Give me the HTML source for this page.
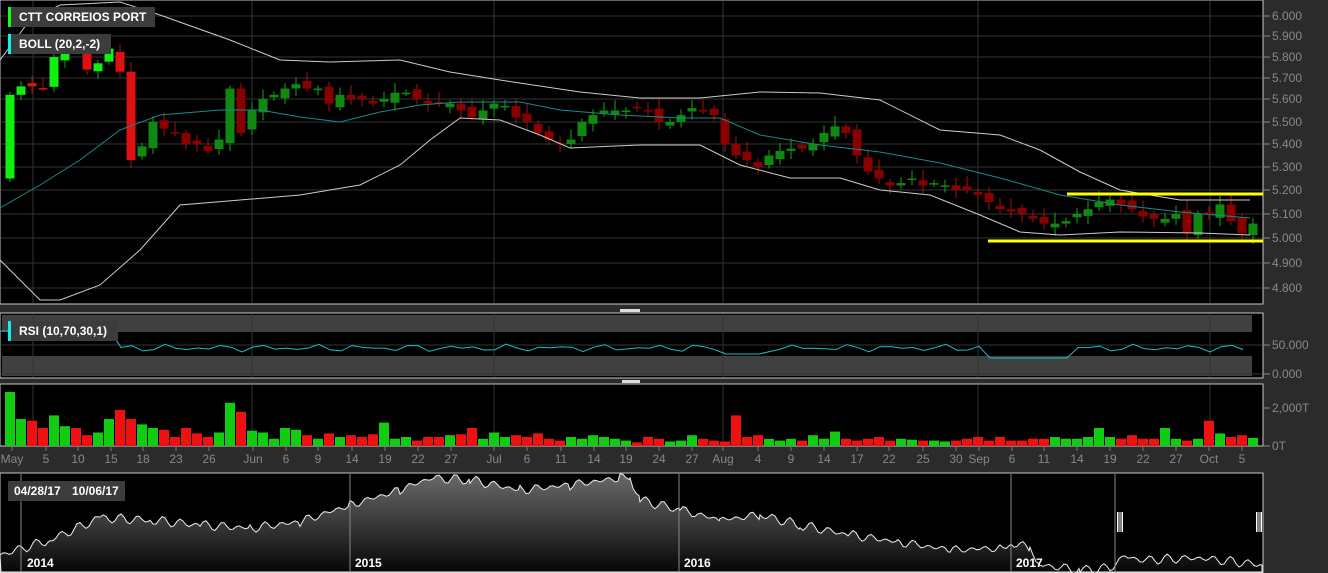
<!DOCTYPE html><html><head><meta charset="utf-8"><style>
body{margin:0;background:#2b2b2b;width:1328px;height:573px;overflow:hidden;font-family:"Liberation Sans",sans-serif}
svg{position:absolute;left:0;top:0}
.lab{position:absolute;background:#3c3c3c;color:#fff;font-size:12px;font-weight:bold;height:20px;line-height:20px;padding:0 8px}
</style></head><body>
<svg id="s" width="1328" height="573" xmlns="http://www.w3.org/2000/svg" font-family="Liberation Sans, sans-serif">
<defs><linearGradient id="g" x1="0" y1="0" x2="0" y2="1"><stop offset="0" stop-color="#6a6a6a"/><stop offset="1" stop-color="#050505"/></linearGradient></defs>
<rect x="0" y="0" width="1263" height="304" fill="#000" stroke="#c8c8d0"/>
<rect x="0" y="313" width="1263" height="65" fill="#000" stroke="#c8c8d0"/>
<rect x="2" y="315" width="1250" height="17" fill="#404040"/>
<rect x="2" y="356" width="1250" height="20" fill="#404040"/>
<rect x="0" y="384" width="1263" height="62" fill="#000" stroke="#c8c8d0"/>
<rect x="0" y="473" width="1263" height="100" fill="#000" stroke="#c8c8d0"/>
<g id="grid" stroke="#333" stroke-width="1"></g>
<g id="c"></g>
<g fill="#888" font-size="12" id="ax"></g>
<rect x="620" y="309" width="20" height="3" fill="#ddd"/><rect x="622" y="380" width="18" height="3" fill="#ddd"/>
</svg>
<div class="lab" style="left:8px;top:7px;width:128px;border-left:3px solid #1f1">CTT CORREIOS PORT</div>
<div class="lab" style="left:8px;top:34px;width:84px;border-left:3px solid #1ee">BOLL (20,2,-2)</div>
<div class="lab" style="left:8px;top:321px;width:91px;border-left:3px solid #1ee">RSI (10,70,30,1)</div>
<div class="lab" style="left:8px;top:481px;width:47px;padding:0 6px">04/28/17</div>
<div class="lab" style="left:66px;top:481px;width:47px;padding:0 6px">10/06/17</div>
<script>
const NS="http://www.w3.org/2000/svg",c=document.getElementById('c'),gr=document.getElementById('grid'),ax=document.getElementById('ax');
function el(t,a,p){const e=document.createElementNS(NS,t);for(const k in a)e.setAttribute(k,a[k]);(p||c).appendChild(e);return e}
const P=[[6,16],[5.9,36],[5.8,57],[5.7,78],[5.6,99],[5.5,122],[5.4,144],[5.3,167],[5.2,190],[5.1,214],[5,238],[4.9,263],[4.8,288]];
function Y(p){for(let i=0;i<P.length-1;i++){if(p<=P[i][0]&&p>=P[i+1][0]){return P[i][1]+(P[i][0]-p)/(0.1)*(P[i+1][1]-P[i][1])}}return p>6?16-(p-6)*200:288+(4.8-p)*250}
P.forEach(q=>{el('line',{x1:1,x2:1262,y1:q[1],y2:q[1]},gr);el('line',{x1:1263,x2:1270,y1:q[1],y2:q[1],stroke:'#888'},gr);const t=el('text',{x:1272,y:q[1]+4},ax);t.textContent=q[0].toFixed(3)});
[[345,'50.000'],[374,'0.000'],[408,'2,000T'],[446,'0T']].forEach(q=>{if(q[1]<440)el('line',{x1:1,x2:1262,y1:q[0],y2:q[0]},gr);el('line',{x1:1263,x2:1270,y1:q[0],y2:q[0],stroke:'#888'},gr);const t=el('text',{x:1272,y:q[0]+4},ax);t.textContent=q[1]});
[33,252,494,723,978,1210].forEach(x=>{el('line',{x1:x,x2:x,y1:1,y2:303},gr);el('line',{x1:x,x2:x,y1:314,y2:377},gr);el('line',{x1:x,x2:x,y1:385,y2:445},gr)});
const D=[['May',12],['5',46],['10',78],['15',111],['18',143],['23',176],['26',209],['Jun',253],['6',286],['9',318],['14',352],['19',385],['22',418],['27',451],['Jul',494],['6',527],['11',561],['14',594],['19',626],['24',659],['27',692],['Aug',723],['4',758],['9',791],['14',824],['17',857],['22',889],['25',923],['30',956],['Sep',979],['6',1012],['11',1044],['14',1077],['19',1110],['22',1143],['27',1176],['Oct',1209],['5',1242]];
D.forEach(d=>{el('line',{x1:d[1],x2:d[1],y1:446,y2:451,stroke:'#777'},gr);const t=el('text',{x:d[1],y:463,'text-anchor':'middle'},ax);t.textContent=d[0]});
const C=[5.62,5.66,5.66,5.65,5.80,5.85,5.83,5.74,5.77,5.84,5.73,5.33,5.39,5.50,5.47,5.45,5.40,5.40,5.37,5.42,5.65,5.45,5.55,5.60,5.62,5.65,5.67,5.65,5.65,5.58,5.62,5.60,5.60,5.58,5.60,5.63,5.63,5.60,5.58,5.58,5.58,5.55,5.52,5.55,5.58,5.57,5.52,5.50,5.45,5.42,5.40,5.42,5.50,5.53,5.55,5.55,5.55,5.56,5.55,5.50,5.50,5.53,5.56,5.55,5.53,5.40,5.35,5.33,5.30,5.35,5.37,5.38,5.38,5.40,5.45,5.48,5.45,5.35,5.28,5.25,5.22,5.23,5.25,5.22,5.23,5.22,5.20,5.20,5.18,5.15,5.12,5.11,5.10,5.08,5.06,5.06,5.07,5.10,5.12,5.15,5.16,5.14,5.12,5.09,5.08,5.08,5.10,5.02,5.10,5.10,5.14,5.07,5.02,5.06];
let prev=5.25,vols=[];
C.forEach((cl,i)=>{const x=10+i*11,op=(i==0)?5.25:prev+((i*7)%5-2)*0.008,up=cl>=op,hi=Math.max(op,cl)+0.015+(i%4)*0.01,lo=Math.min(op,cl)-0.015-(i%3)*0.01;
const col=up?(i<12?'#11ee11':'#118811'):(i<12?'#dd1111':'#880000');
el('line',{x1:x,x2:x,y1:Y(hi),y2:Y(lo),stroke:up?'#11aa11':'#aa1111'});
const a=Y(Math.max(op,cl)),b=Y(Math.min(op,cl));el('rect',{x:x-4.5,y:a,width:9,height:Math.max(1.5,b-a),fill:col});
const v=[60,30,28,20,34,22,20,12,15,30,40,30,24,20,18,10,20,14,10,15,48,38,17,15,8,20,18,12,8,14,10,12,10,13,26,8,10,6,10,10,12,13,20,8,15,10,12,10,14,8,6,10,8,12,10,8,6,4,10,8,5,6,12,8,6,5,34,10,12,8,6,8,6,12,8,16,8,6,8,10,6,8,7,6,6,5,6,8,10,6,10,6,6,8,8,10,8,8,10,20,10,8,12,8,8,20,8,6,8,28,14,10,12,9,16,8,14][i]||8;
const vh=v*0.9;el('rect',{x:x-5,y:446-vh,width:10,height:vh,fill:up?'#11cc11':'#ee1111'});prev=cl});
function pl(pts,col,w){el('polyline',{points:pts.map(p=>p.join(',')).join(' '),fill:'none',stroke:col,'stroke-width':w||1})}
pl([[0,60],[30,20],[60,5],[120,2],[160,15],[230,40],[280,60],[330,62],[400,60],[450,72],[500,80],[580,92],[640,98],[700,98],[760,92],[820,93],[880,100],[940,130],[1000,135],[1040,150],[1080,172],[1120,190],[1180,200],[1250,200]],'#ccc');
pl([[0,260],[40,300],[60,300],[100,285],[140,250],[180,205],[240,200],[300,195],[360,185],[400,165],[430,140],[460,118],[500,120],[540,135],[570,148],[640,145],[700,145],[740,165],[790,178],[840,178],[880,190],[930,195],[980,215],[1020,232],[1060,235],[1120,232],[1200,233],[1250,235]],'#ccc');
pl([[0,208],[40,185],[80,160],[120,130],[160,115],[220,110],[260,110],[300,117],[340,122],[380,112],[420,105],[460,102],[520,102],[560,110],[620,115],[680,118],[720,118],[760,135],[820,145],[880,152],[940,163],[1000,178],[1060,195],[1120,205],[1180,212],[1250,218]],'#1a8a8a');
el('line',{x1:1067,x2:1263,y1:194,y2:194,stroke:'#ffff00','stroke-width':3});
el('line',{x1:988,x2:1263,y1:241,y2:241,stroke:'#ffff00','stroke-width':3});
let r=[];for(let x=0;x<=1252;x+=11){let y=348+Math.sin(x*0.37)*2+Math.cos(x*0.13)*2;if(x<120)y=331;if(x>720&&x<760)y=354;if(x>980&&x<1070)y=358;r.push([x,y.toFixed(1)])}pl(r,'#1bbcc8');
const N=[[0,555],[50,540],[100,518],[150,520],[200,525],[250,528],[300,522],[350,505],[400,490],[430,478],[470,480],[520,490],[570,485],[620,478],[630,476],[640,500],[680,510],[720,520],[760,515],[800,525],[850,535],[900,542],[950,550],[1000,548],[1011,543],[1030,548],[1040,565],[1080,570],[1110,568],[1125,556],[1140,560],[1200,558],[1263,565]];
let np=[];for(let i=0;i<N.length-1;i++){for(let x=N[i][0];x<N[i+1][0];x+=3){const t=(x-N[i][0])/(N[i+1][0]-N[i][0]);np.push([x,(N[i][1]+(N[i+1][1]-N[i][1])*t+Math.sin(x*1.7)*3+Math.sin(x*0.3)*2).toFixed(1)])}}np.push([1262,565]);
el('path',{d:'M1,572 L'+np.map(p=>p.join(',')).join(' L')+' L1262,572Z',fill:'url(#g)',stroke:'#eee','stroke-width':1});
[21,350,679,1011,1115].forEach(x=>el('line',{x1:x,x2:x,y1:474,y2:572,stroke:'#888'}));
[[27,'2014'],[355,'2015'],[684,'2016'],[1016,'2017']].forEach(q=>{const t=el('text',{x:q[0],y:567,fill:'#fff','font-size':12,'font-weight':'bold'});t.textContent=q[1]});
[1117,1256].forEach(x=>{el('rect',{x:x,y:512,width:6,height:20,fill:'#fff'});el('line',{x1:x+2,x2:x+2,y1:512,y2:532,stroke:'#000'});el('line',{x1:x+4,x2:x+4,y1:512,y2:532,stroke:'#000'})});
</script>
</body></html>
